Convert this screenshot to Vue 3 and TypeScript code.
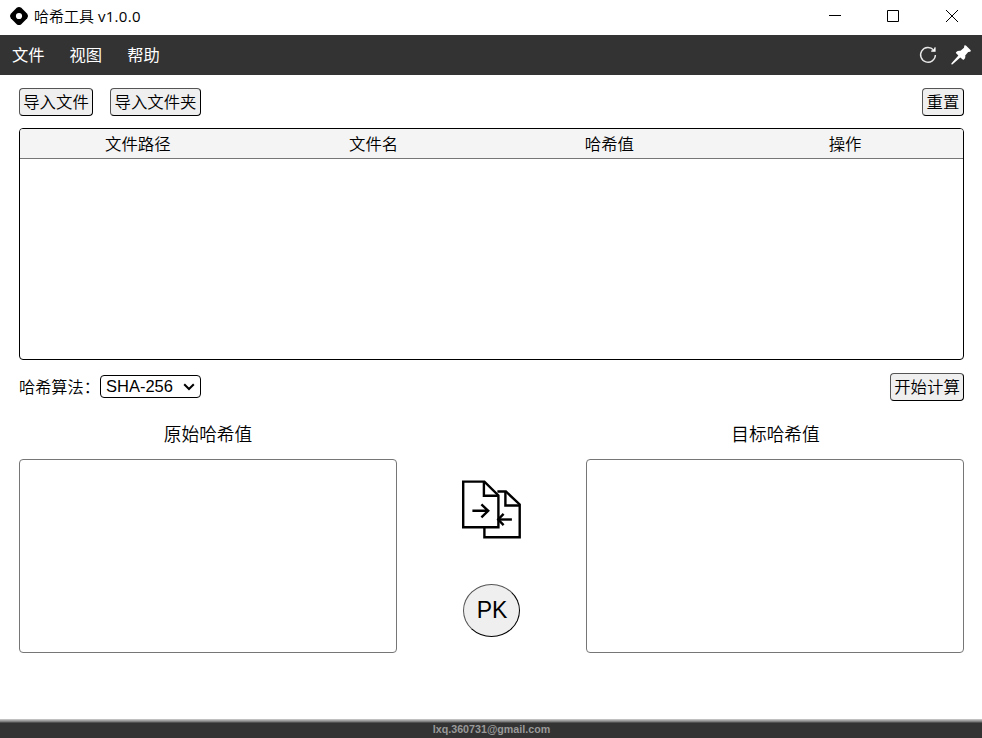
<script setup lang="ts">
import { ref } from 'vue'

const menus: string[] = ['文件', '视图', '帮助']
const columns: string[] = ['文件路径', '文件名', '哈希值', '操作']
const algorithms: string[] = ['SHA-256', 'SHA-1', 'SHA-512', 'MD5']
const algorithm = ref<string>('SHA-256')
const original = ref<string>('')
const target = ref<string>('')

function reset(): void {
  original.value = ''
  target.value = ''
}
</script>

<template>
  <div class="window">
    <header class="titlebar">
      <svg class="logo" viewBox="0 0 20 20">
        <path d="M7.7 1.8Q10 0 12.3 1.8L18.2 7.7Q20 10 18.2 12.3L12.3 18.2Q10 20 7.7 18.2L1.8 12.3Q0 10 1.8 7.7Z" />
        <circle cx="10" cy="10" r="3.1" fill="#fff" />
      </svg>
      <span class="title">哈希工具 <span class="version">v1.0.0</span></span>
      <div class="controls">
        <svg viewBox="0 0 14 14"><path d="M1 6.5H13" /></svg>
        <svg viewBox="0 0 14 14"><path d="M1.5 1.5H12.5V12.5H1.5Z" /></svg>
        <svg viewBox="0 0 14 14"><path d="M1 1L13 13M13 1L1 13" /></svg>
      </div>
    </header>

    <nav class="menubar">
      <span v-for="menu in menus" :key="menu" class="menu">{{ menu }}</span>
      <div class="tools">
        <svg class="refresh" viewBox="0 0 18 18">
          <path d="M14.6 4A7.4 7.4 0 1 0 16.4 9" fill="none" stroke="#e8e8e8" stroke-width="1.4" />
          <path d="M16.6 1.3V5.7H12.2V4.6L14.6 4 15.6 1.3Z" fill="#fff" />
        </svg>
        <svg class="pin" viewBox="0 0 20 20">
          <path d="M13.3.4Q14.4-.2 15.2.7L19.5 5Q20.3 6.2 19.1 6.7L17.2 6.9 14.2 10.4Q14.8 13.2 13 14.5Q12.3 15 11.7 14.4L9.3 12.4 1.3 19.6.2 19.3.5 18.2 7.4 10.6 5.1 8.3Q4.6 7.8 5.3 7 6.6 5.5 9.5 5.8L13 2.8Z" fill="#fff" />
        </svg>
      </div>
    </nav>

    <main class="content">
      <div class="toolbar">
        <button class="btn">导入文件</button>
        <button class="btn wide">导入文件夹</button>
        <button class="btn small end" @click="reset">重置</button>
      </div>

      <section class="table">
        <div class="thead">
          <span v-for="column in columns" :key="column">{{ column }}</span>
        </div>
      </section>

      <div class="algorithm">
        <label for="algorithm">哈希算法：</label>
        <div class="picker">
          <select id="algorithm" v-model="algorithm">
            <option v-for="name in algorithms" :key="name">{{ name }}</option>
          </select>
          <svg class="arrow" viewBox="0 0 12 8"><path d="M1.2 1.2L6 6L10.8 1.2" /></svg>
        </div>
        <button class="btn end">开始计算</button>
      </div>

      <section class="compare">
        <div class="side">
          <h2>原始哈希值</h2>
          <textarea v-model="original"></textarea>
        </div>
        <div class="middle">
          <svg class="files" viewBox="0.6 0 60 60" fill="none" stroke="#000" stroke-width="2.4">
            <path d="M23 46V57.2H58.3V24.5L44.5 11.5H36" />
            <path d="M44 12V25.5H58" />
            <path d="M50.5 39.5H38" />
            <path d="M1.8 1.6H23L37 15.5V47.2H1.8Z" fill="#fff" />
            <path d="M38 39.5H36M42.2 33.8L36.8 39.5L42.2 45.2" />
            <path d="M22.5 2V15.7H36.5" />
            <path d="M11 30.8H27M20 24.3L26.8 30.8L20 37.3" />
          </svg>
          <button class="pk">PK</button>
        </div>
        <div class="side">
          <h2 class="shifted">目标哈希值</h2>
          <textarea v-model="target"></textarea>
        </div>
      </section>
    </main>

    <footer class="footer">lxq.360731@gmail.com</footer>
  </div>
</template>

<style>
body {
  margin: 0;
  overflow: hidden;
}
</style>

<style scoped>
* {
  box-sizing: border-box;
}
.window {
  display: flex;
  flex-direction: column;
  width: 982px;
  height: 738px;
  background: #fff;
  color: #000;
  font: 350 16.4px/24px "Liberation Sans", "Noto Sans CJK SC", "Noto Sans CJK SC DemiLight", sans-serif;
}
.titlebar {
  display: flex;
  align-items: center;
  height: 35px;
  padding: 0 23px 3px 9px;
}
.logo {
  width: 20px;
  height: 20px;
}
.title {
  margin-left: 5px;
  font: 350 15px/24px "Open Sans", "Noto Sans CJK SC", sans-serif;
}
.version {
  font-weight: 400;
  letter-spacing: 0.3px;
}
.controls {
  display: flex;
  gap: 45px;
  margin-left: auto;
}
.controls svg {
  width: 14px;
  height: 14px;
  fill: none;
  stroke: #000;
  stroke-width: 1;
}
.controls svg:first-child {
  margin-right: -1px;
}
.menubar {
  display: flex;
  align-items: center;
  gap: 25px;
  height: 40px;
  padding: 0 11px 0 12px;
  background: #333;
  color: #fff;
}
.menu {
  font-weight: 400;
  font-size: 16.3px;
}
.tools {
  display: flex;
  align-items: center;
  gap: 14px;
  margin-left: auto;
}
.refresh {
  width: 18px;
  height: 18px;
}
.pin {
  width: 20px;
  height: 20px;
}
.content {
  flex: 1;
  display: flex;
  flex-direction: column;
  padding: 13px 18px 0 19px;
}
.toolbar {
  display: flex;
  gap: 17px;
  height: 28px;
}
.btn {
  width: 74px;
  height: 28px;
  padding: 0;
  border: 1px solid;
  border-color: #555 #000 #000 #555;
  border-radius: 4px;
  background: #efefef;
  color: #000;
  font: inherit;
  white-space: nowrap;
}
.btn.wide {
  width: 91px;
}
.btn.small {
  width: 42px;
}
.end {
  margin-left: auto;
}
.table {
  height: 232px;
  margin-top: 12px;
  border: 1px solid #000;
  border-radius: 4px;
  overflow: hidden;
}
.thead {
  display: grid;
  grid-template-columns: repeat(4, 1fr);
  height: 30px;
  border-bottom: 1px solid #767676;
  background: #f4f4f4;
  line-height: 30px;
  text-align: center;
}
.algorithm {
  display: flex;
  height: 28px;
  margin-top: 13px;
}
.algorithm label {
  width: 81px;
  font-size: 16.2px;
  line-height: 28px;
  white-space: nowrap;
}
.picker {
  position: relative;
  width: 101px;
  height: 23px;
  margin-top: 2px;
}
.picker select {
  display: block;
  width: 101px;
  height: 23px;
  padding: 0 5px 2px;
  border: 1px solid #000;
  border-radius: 4px;
  background: #fff;
  color: #000;
  font: 400 16.5px "Liberation Sans", sans-serif;
  appearance: none;
}
.arrow {
  position: absolute;
  top: 8px;
  right: 6px;
  width: 12px;
  height: 8px;
  fill: none;
  stroke: #000;
  stroke-width: 2;
  pointer-events: none;
}
.compare {
  display: flex;
  margin-top: 20px;
}
.side {
  width: 378px;
}
.side h2 {
  height: 38px;
  margin: 0;
  font-size: 17.7px;
  font-weight: 350;
  line-height: 28px;
  text-align: center;
}
.side h2.shifted {
  padding-left: 1px;
}
.side textarea {
  display: block;
  width: 378px;
  height: 194px;
  border: 1px solid #767676;
  border-radius: 4px;
  resize: none;
}
.middle {
  flex: 1;
  display: flex;
  flex-direction: column;
  align-items: center;
  gap: 44px;
  padding-top: 59px;
}
.files {
  width: 60px;
  height: 60px;
}
.pk {
  width: 57px;
  height: 53px;
  padding: 0 0 0 1px;
  border: 1px solid;
  border-color: #555 #000 #000 #555;
  border-radius: 50%;
  background: #efefef;
  color: #000;
  font: 400 23px "Liberation Sans", sans-serif;
}
.footer {
  height: 19px;
  padding: 3px 0 0 1px;
  background: linear-gradient(#d0d0d0, #707070 3px, #333 4px);
  color: #999;
  font: bold 10.7px/15px "Liberation Sans", sans-serif;
  text-align: center;
}
</style>
